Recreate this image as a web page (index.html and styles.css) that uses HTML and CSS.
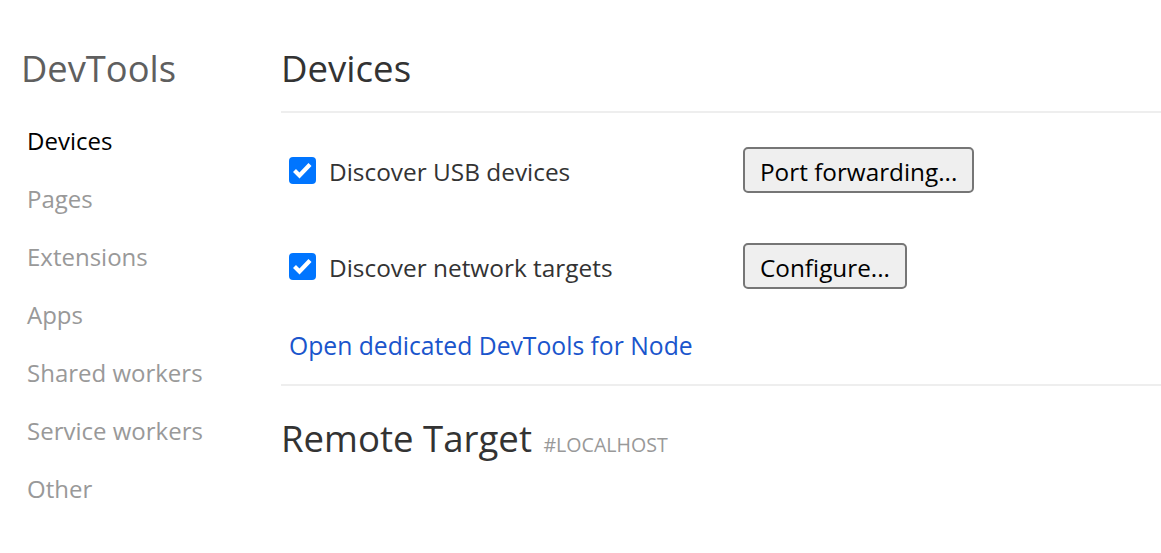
FILE: index.html
```html
<!DOCTYPE html>
<html>
<head>
<meta charset="utf-8">
<link rel="stylesheet" href="styles.css">
</head>
<body>
<div class="page">
  <aside class="sidebar">
    <h1 class="brand">DevTools</h1>
    <ul class="nav">
      <li class="nav-item selected">Devices</li>
      <li class="nav-item">Pages</li>
      <li class="nav-item">Extensions</li>
      <li class="nav-item">Apps</li>
      <li class="nav-item">Shared workers</li>
      <li class="nav-item">Service workers</li>
      <li class="nav-item">Other</li>
    </ul>
  </aside>
  <main class="content">
    <header class="section-header">
      <h1 class="title">Devices</h1>
    </header>
    <div class="options">
      <div class="row">
        <span class="check"><svg viewBox="0 0 27 27" width="27" height="27"><path d="M5.5 13.5 L10.5 18.5 L21 7.5" fill="none" stroke="#fff" stroke-width="4.2" stroke-linecap="butt" stroke-linejoin="miter"/></svg></span>
        <span class="label">Discover USB devices</span>
        <button class="btn">Port forwarding...</button>
      </div>
      <div class="row">
        <span class="check"><svg viewBox="0 0 27 27" width="27" height="27"><path d="M5.5 13.5 L10.5 18.5 L21 7.5" fill="none" stroke="#fff" stroke-width="4.2" stroke-linecap="butt" stroke-linejoin="miter"/></svg></span>
        <span class="label">Discover network targets</span>
        <button class="btn">Configure...</button>
      </div>
      <a class="link" href="#">Open dedicated DevTools for Node</a>
    </div>
    <div class="remote">
      <h1 class="title">Remote Target <span class="host">#LOCALHOST</span></h1>
    </div>
  </main>
</div>
</body>
</html>
```

FILE: styles.css
```css
html, body {
  margin: 0;
  padding: 0;
  background: #fff;
}
body {
  font-family: "Open Sans", "Noto Sans", sans-serif;
  color: #333;
}
.page {
  display: flex;
  width: 1161px;
  height: 553px;
  overflow: hidden;
}
.sidebar {
  width: 281px;
  flex: none;
  box-sizing: border-box;
  padding-left: 21px;
}
.brand {
  margin: 44px 0 0 0;
  height: 48px;
  line-height: 48px;
  font-size: 36.3px;
  font-weight: 400;
  color: #5f5f5f;
}
.nav {
  list-style: none;
  margin: 20px 0 0 0;
  padding: 0 0 0 6px;
}
.nav-item {
  height: 58px;
  line-height: 58px;
  font-size: 24px;
  color: #999;
}
.nav-item.selected {
  color: #000;
}
.content {
  flex: 1;
  padding-top: 44px;
}
.section-header {
  border-bottom: 2px solid #eee;
  padding-bottom: 19px;
}
.title {
  margin: 0;
  height: 48px;
  line-height: 48px;
  font-size: 36.6px;
  font-weight: 400;
  color: #333;
}
.options {
  padding: 34px 0 22px 8px;
  border-bottom: 2px solid #eee;
  display: flex;
  flex-direction: column;
}
.row {
  display: flex;
  align-items: center;
  height: 46px;
  margin-bottom: 50px;
}
.row + .row {
  margin-bottom: 41px;
}
.check {
  width: 27px;
  height: 27px;
  border-radius: 4px;
  background: #0075ff;
  display: flex;
  flex: none;
}
.label {
  margin-left: 13px;
  padding-top: 3px;
  width: 414px;
  font-size: 24.4px;
  color: #333;
}
.btn {
  height: 46px;
  box-sizing: border-box;
  padding: 2px 15px 0 15px;
  font-family: "Open Sans", "Noto Sans", sans-serif;
  font-size: 24.3px;
  color: #000;
  background: #efefef;
  border: 2px solid #767676;
  border-radius: 5px;
}
.link {
  display: block;
  height: 32px;
  line-height: 32px;
  font-size: 24.7px;
  color: #1a55cc;
  text-decoration: none;
}
.remote {
  padding-top: 28px;
}
.host {
  font-size: 19.6px;
  color: #999;
  margin-left: 2px;
}
```
